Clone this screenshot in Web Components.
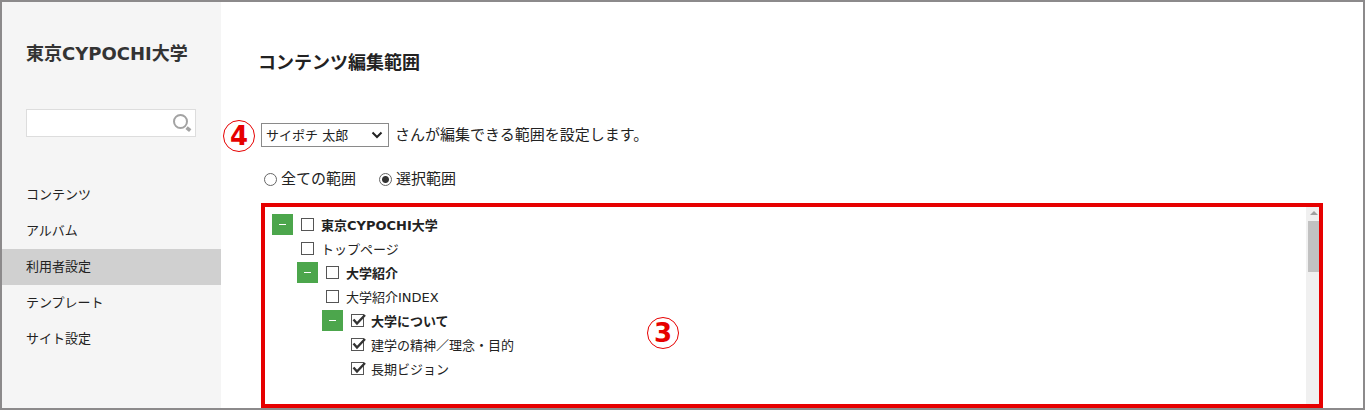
<!DOCTYPE html>
<html lang="ja">
<head>
<meta charset="UTF-8">
<title>コンテンツ編集範囲</title>
<style>
    body {
        margin: 0;
        font-family: "DejaVu Sans", "Noto Sans CJK JP", sans-serif;
        font-size: 13px;
        color: #222;
        background: #fff;
    }
</style>
</head>
<body>
<app-shell>
    <side-bar slot="side" site="東京CYPOCHI大学">
        <nav-item>コンテンツ</nav-item>
        <nav-item>アルバム</nav-item>
        <nav-item current>利用者設定</nav-item>
        <nav-item>テンプレート</nav-item>
        <nav-item>サイト設定</nav-item>
    </side-bar>
    <range-editor heading="コンテンツ編集範囲">
        <tree-item label="東京CYPOCHI大学" folder>
            <tree-item label="トップページ"></tree-item>
            <tree-item label="大学紹介" folder>
                <tree-item label="大学紹介INDEX"></tree-item>
                <tree-item label="大学について" folder checked>
                    <tree-item label="建学の精神／理念・目的" checked></tree-item>
                    <tree-item label="長期ビジョン" checked></tree-item>
                </tree-item>
            </tree-item>
        </tree-item>
    </range-editor>
</app-shell>

<script>
class AppShell extends HTMLElement {
    constructor() {
        super();
        this.attachShadow({ mode: 'open' }).innerHTML = `
            <style>
                :host {
                    display: grid;
                    grid-template-columns: 219px 1fr;
                    box-sizing: border-box;
                    min-height: 100vh;
                    border: 2px solid #8c8a8b;
                }
                main {
                    display: grid;
                    min-width: 0;
                }
            </style>
            <slot name="side"></slot>
            <main><slot></slot></main>
        `;
    }
}

class SideBar extends HTMLElement {
    connectedCallback() {
        this.attachShadow({ mode: 'open' }).innerHTML = `
            <style>
                :host {
                    display: block;
                    padding-top: 39px;
                    background: #f5f5f5;
                }
                h1 {
                    margin: 0 24px;
                    font-size: 18px;
                    line-height: 26px;
                    color: #333;
                    white-space: nowrap;
                }
                form {
                    display: flex;
                    align-items: center;
                    box-sizing: border-box;
                    height: 28px;
                    margin: 42px 25px 40px 24px;
                    border: 1px solid #ddd;
                    background: #fff;
                }
                input {
                    flex: 1;
                    min-width: 0;
                    padding: 0 6px;
                    border: 0;
                    outline: 0;
                    background: none;
                    font: inherit;
                }
                button {
                    display: flex;
                    margin-right: 3px;
                    padding: 0;
                    border: 0;
                    background: none;
                }
            </style>
            <h1>${this.getAttribute('site')}</h1>
            <form role="search">
                <input type="text" aria-label="検索">
                <button type="button" aria-label="検索する">
                    <svg width="20" height="20" viewBox="0 0 20 20" fill="none" stroke="#a3a3a3">
                        <circle cx="8.5" cy="8.5" r="6.5" stroke-width="2"/>
                        <path d="M14.6 14.6l3.6 3" stroke-width="3.6"/>
                    </svg>
                </button>
            </form>
            <nav><slot></slot></nav>
        `;
    }
}

class NavItem extends HTMLElement {
    constructor() {
        super();
        this.attachShadow({ mode: 'open' }).innerHTML = `
            <style>
                :host {
                    display: block;
                }
                :host([current]) {
                    background: #d0d0d0;
                }
                a {
                    display: block;
                    padding: 0 24px;
                    line-height: 36px;
                    color: #222;
                    text-decoration: none;
                }
            </style>
            <a href="#"><slot></slot></a>
        `;
    }
}

class StepMark extends HTMLElement {
    constructor() {
        super();
        this.attachShadow({ mode: 'open' }).innerHTML = `
            <style>
                :host {
                    display: block;
                    box-sizing: border-box;
                    width: 32px;
                    height: 32px;
                    border: 1px solid #e60000;
                    border-radius: 50%;
                    color: #e60000;
                    font-size: 26px;
                    font-weight: bold;
                    line-height: 30px;
                    text-align: center;
                }
            </style>
            <slot></slot>
        `;
    }
}

class RangeEditor extends HTMLElement {
    connectedCallback() {
        this.attachShadow({ mode: 'open' }).innerHTML = `
            <style>
                :host {
                    display: flex;
                    flex-direction: column;
                    padding: 48px 40px 0 37px;
                    font-size: 15px;
                }
                h2 {
                    margin: 0;
                    font-size: 18px;
                    line-height: 26px;
                }
                .user {
                    display: flex;
                    align-items: center;
                    gap: 6px;
                    position: relative;
                    margin: 47px 0 0 3px;
                    line-height: 24px;
                }
                .user step-mark {
                    position: absolute;
                    left: -38px;
                    top: -3px;
                }
                .select {
                    display: grid;
                    align-items: center;
                }
                .select > * {
                    grid-area: 1 / 1;
                }
                .select svg {
                    justify-self: end;
                    margin-right: 6px;
                    pointer-events: none;
                }
                select {
                    appearance: none;
                    width: 128px;
                    height: 24px;
                    padding: 0 20px 0 4px;
                    border: 1px solid #8a8a8a;
                    border-radius: 0;
                    background: #fff;
                    color: #222;
                    font-family: inherit;
                    font-size: 13px;
                }
                fieldset {
                    display: flex;
                    gap: 23px;
                    margin: 20px 0 0 6px;
                    padding: 0;
                    border: 0;
                    line-height: 24px;
                }
                .choice {
                    display: flex;
                    align-items: center;
                    gap: 4px;
                }
                .choice input {
                    appearance: none;
                    box-sizing: border-box;
                    width: 13px;
                    height: 13px;
                    margin: 0;
                    border: 1px solid #666;
                    border-radius: 50%;
                }
                .choice input:checked {
                    background: radial-gradient(circle, #333 3px, #fff 4px);
                }
                .panel {
                    display: flex;
                    flex: 1;
                    position: relative;
                    margin: 12px 0 0 3px;
                    border: 4px solid #e60000;
                    font-size: 13px;
                }
                .panel step-mark {
                    position: absolute;
                    left: 382px;
                    top: 110px;
                }
                .tree {
                    flex: 1;
                    padding: 5px 7px 16px;
                }
                .bar {
                    display: flex;
                    flex-direction: column;
                    width: 13px;
                    background: #f0f0f0;
                }
                .bar svg {
                    align-self: end;
                }
                .thumb {
                    height: 51px;
                    margin-left: 2px;
                    background: #c1c1c1;
                }
            </style>
            <h2>${this.getAttribute('heading')}</h2>
            <div class="user">
                <step-mark>4</step-mark>
                <div class="select">
                    <select id="user"><option>サイポチ 太郎</option></select>
                    <svg width="12" height="8" viewBox="0 0 12 8" fill="none" stroke="#222" stroke-width="2">
                        <path d="M1.5 1.5L6 6l4.5-4.5"/>
                    </svg>
                </div>
                <label for="user">さんが編集できる範囲を設定します。</label>
            </div>
            <fieldset>
                <div class="choice">
                    <input type="radio" name="range" id="all">
                    <label for="all">全ての範囲</label>
                </div>
                <div class="choice">
                    <input type="radio" name="range" id="part" checked>
                    <label for="part">選択範囲</label>
                </div>
            </fieldset>
            <div class="panel">
                <div class="tree"><slot></slot></div>
                <div class="bar">
                    <svg width="11" height="14" viewBox="0 0 11 14"><path d="M2 8l4-4 4 4z" fill="#a0a0a0"/></svg>
                    <div class="thumb"></div>
                </div>
                <step-mark>3</step-mark>
            </div>
        `;
    }
}

class TreeItem extends HTMLElement {
    connectedCallback() {
        const folder = this.hasAttribute('folder');
        this.attachShadow({ mode: 'open' }).innerHTML = `
            <style>
                :host {
                    display: block;
                }
                .row {
                    display: flex;
                    align-items: center;
                    height: 24px;
                    padding-left: 4px;
                    font-weight: normal;
                }
                .row.folder {
                    padding-left: 0;
                    font-weight: bold;
                }
                button {
                    display: flex;
                    align-items: center;
                    justify-content: center;
                    width: 21px;
                    height: 21px;
                    margin-right: 8px;
                    padding: 0;
                    border: 0;
                    background: #4ca64c;
                }
                .check {
                    display: grid;
                    margin-right: 7px;
                }
                .check > * {
                    grid-area: 1 / 1;
                }
                input {
                    appearance: none;
                    box-sizing: border-box;
                    width: 13px;
                    height: 13px;
                    margin: 0;
                    border: 1px solid #555;
                    background: #fff;
                }
                .check svg {
                    z-index: 1;
                    overflow: visible;
                    visibility: hidden;
                    pointer-events: none;
                }
                input:checked + svg {
                    visibility: visible;
                }
                label {
                    white-space: nowrap;
                }
                .children {
                    margin-left: 25px;
                }
            </style>
            <div class="row ${folder ? 'folder' : ''}">
                ${folder ? `<button type="button" aria-label="閉じる">
                    <svg width="7" height="1"><path d="M0 0h7v1H0z" fill="#fff"/></svg>
                </button>` : ''}
                <span class="check">
                    <input type="checkbox" id="box" ${this.hasAttribute('checked') ? 'checked' : ''}>
                    <svg width="13" height="13" viewBox="0 0 13 13" fill="none" stroke="#333" stroke-width="2.4">
                        <path d="M2.5 5.5L6 9.5l8-8.5"/>
                    </svg>
                </span>
                <label for="box">${this.getAttribute('label')}</label>
            </div>
            <div class="children"><slot></slot></div>
        `;
    }
}

customElements.define('app-shell', AppShell);
customElements.define('side-bar', SideBar);
customElements.define('nav-item', NavItem);
customElements.define('step-mark', StepMark);
customElements.define('range-editor', RangeEditor);
customElements.define('tree-item', TreeItem);
</script>
</body>
</html>
